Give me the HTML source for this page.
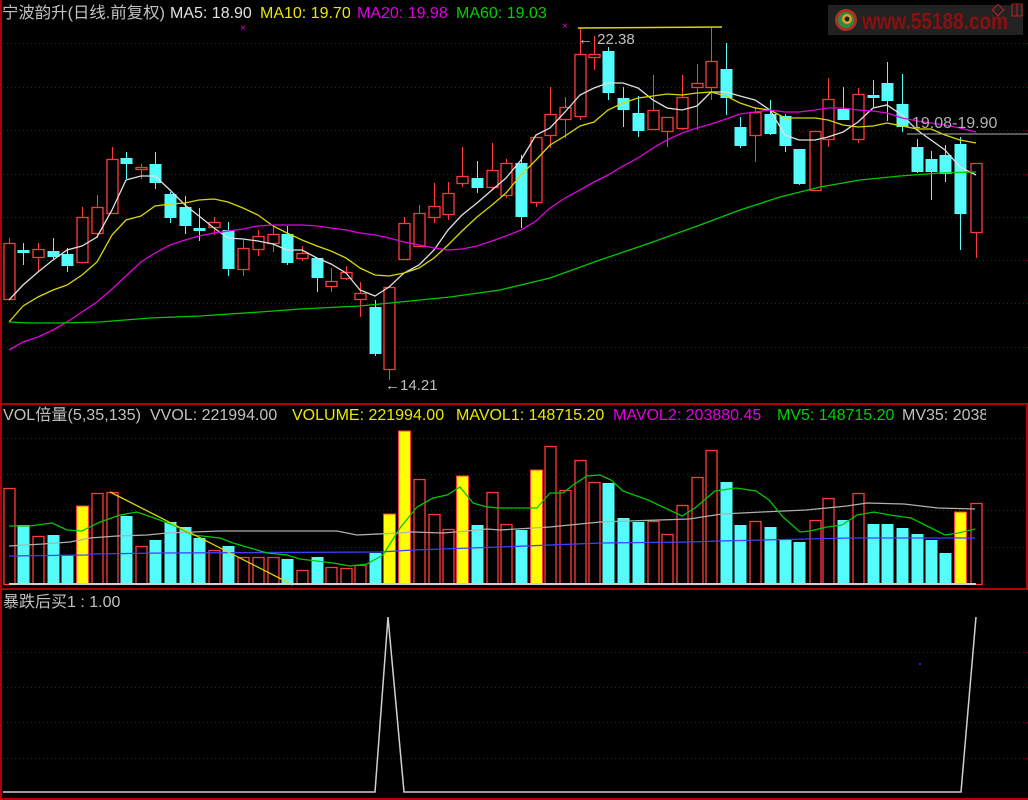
<!DOCTYPE html>
<html><head><meta charset="utf-8"><style>
html,body{margin:0;padding:0;background:#000;width:1028px;height:800px;overflow:hidden}
svg{display:block}
text{font-family:"Liberation Sans","Noto Sans CJK SC",sans-serif}
</style></head><body>
<svg id="s" width="1028" height="800" viewBox="0 0 1028 800" xmlns="http://www.w3.org/2000/svg">
<rect width="1028" height="800" fill="#000"/>
<g stroke="#8a0000" stroke-width="1" stroke-dasharray="1,3">
<line x1="3" y1="43.5" x2="1028" y2="43.5"/><line x1="3" y1="87.5" x2="1028" y2="87.5"/><line x1="3" y1="130.5" x2="1028" y2="130.5"/><line x1="3" y1="174.5" x2="1028" y2="174.5"/><line x1="3" y1="217.5" x2="1028" y2="217.5"/><line x1="3" y1="260.5" x2="1028" y2="260.5"/><line x1="3" y1="303.5" x2="1028" y2="303.5"/><line x1="3" y1="347.5" x2="1028" y2="347.5"/>
<line x1="3" y1="438.5" x2="1028" y2="438.5"/><line x1="3" y1="474.5" x2="1028" y2="474.5"/><line x1="3" y1="510.5" x2="1028" y2="510.5"/><line x1="3" y1="547.5" x2="1028" y2="547.5"/>
<line x1="3" y1="652.5" x2="1028" y2="652.5"/><line x1="3" y1="687.5" x2="1028" y2="687.5"/><line x1="3" y1="722.5" x2="1028" y2="722.5"/><line x1="3" y1="758.5" x2="1028" y2="758.5"/>
</g>
<g stroke="#b00000" stroke-width="2">
<line x1="1" y1="0" x2="1" y2="800"/>
<line x1="0" y1="404" x2="1028" y2="404"/>
<line x1="0" y1="589" x2="1028" y2="589"/>
<line x1="0" y1="799" x2="1028" y2="799"/>
<line x1="1027" y1="404" x2="1027" y2="589"/>
</g>
<g id="cand"></g>
<g fill="none" stroke-width="1.3">
<polyline id="ma5" stroke="#e0e0e0"/>
<polyline id="ma10" stroke="#d8d800"/>
<polyline id="ma20" stroke="#e000e0"/>
<polyline id="ma60" stroke="#00c800"/>
</g>
<line x1="578" y1="28" x2="722" y2="27" stroke="#d8d800" stroke-width="1.5"/>
<text x="240" y="31" fill="#e000e0" font-size="10">×</text>
<text x="562" y="29" fill="#e000e0" font-size="10">×</text>
<text x="578" y="44" fill="#c0c0c0" font-size="15">← 22.38</text>
<text x="385" y="390" fill="#c0c0c0" font-size="15">←14.21</text>
<line x1="907" y1="134" x2="1028" y2="134" stroke="#b0b0b0"/>
<text x="912" y="128" fill="#b0b0b0" font-size="16">19.08-19.90</text>
<rect x="828" y="5" width="195" height="30" fill="#222"/>
<circle cx="846" cy="20" r="11" fill="#b03020"/><circle cx="846" cy="20" r="8" fill="#2a8a4a"/><circle cx="847" cy="19" r="5" fill="#e8a020"/><circle cx="847" cy="19" r="2.5" fill="#222"/>
<text x="862" y="29" fill="#8a1010" font-weight="bold" font-size="23" textLength="146" lengthAdjust="spacingAndGlyphs">www.55188.com</text>
<rect x="994" y="6" width="8" height="8" fill="none" stroke="#c02020" transform="rotate(45 998 10)"/>
<rect x="1012" y="4" width="10" height="12" fill="none" stroke="#c02020"/><line x1="1017" y1="4" x2="1017" y2="16" stroke="#c02020"/>
<g font-size="16">
<text x="2" y="18" fill="#c0c0c0" textLength="163" lengthAdjust="spacingAndGlyphs">宁波韵升(日线.前复权)</text>
<text x="170" y="18" fill="#e0e0e0">MA5: 18.90</text>
<text x="260" y="18" fill="#e8e800">MA10: 19.70</text>
<text x="357" y="18" fill="#e000e0">MA20: 19.98</text>
<text x="456" y="18" fill="#00d000">MA60: 19.03</text>
</g>
<g id="vol"></g>
<g fill="none" stroke-width="1.3">
<polyline id="mv35" stroke="#b0b0b0"/>
<polyline id="mv135" stroke="#4040ff"/>
<polyline id="mv5" stroke="#00c800"/>
</g>
<line x1="110" y1="492" x2="293" y2="585" stroke="#d8d800" stroke-width="1.3"/>
<line x1="9" y1="584" x2="976" y2="584" stroke="#d0d0d0" stroke-width="2"/>
<g font-size="16">
<text x="3" y="420" fill="#c0c0c0" textLength="138" lengthAdjust="spacingAndGlyphs">VOL倍量(5,35,135)</text>
<text x="150" y="420" fill="#c0c0c0">VVOL: 221994.00</text>
<text x="292" y="420" fill="#e8e800">VOLUME: 221994.00</text>
<text x="456" y="420" fill="#e8e800">MAVOL1: 148715.20</text>
<text x="613" y="420" fill="#e000e0">MAVOL2: 203880.45</text>
<text x="777" y="420" fill="#00d000">MV5: 148715.20</text>
</g>
<svg x="0" y="404" width="986" height="30"><text x="902" y="16" fill="#c0c0c0" font-size="16">MV35: 203880</text></svg>
<text x="3" y="607" fill="#c0c0c0" font-size="16">暴跌后买1 : 1.00</text>
<polyline fill="none" stroke="#d0d0d0" stroke-width="1.5" points="3,792 375,792 388,617 404,792 961,792 976,617"/>
<rect x="919" y="663" width="2" height="2" fill="#2020ff"/>
</svg>
<script>
var NS="http://www.w3.org/2000/svg";
function el(p,t,a){var e=document.createElementNS(NS,t);for(var k in a)e.setAttribute(k,a[k]);p.appendChild(e);return e;}
var C=[[9,243,299,238,299,'r'],[23,250,252,243,265,'c'],[38,249,257,243,272,'r'],[53,251,256,238,259,'c'],[67,254,265,248,272,'c'],[82,217,262,207,262,'r'],[97,207,233,195,238,'r'],[112,159,213,147,213,'r'],[126,158,163,152,179,'c'],[141,167,169,164,179,'r'],[155,164,182,152,189,'c'],[170,194,217,192,223,'c'],[185,207,225,196,234,'c'],[199,228,230,208,241,'c'],[214,222,227,217,235,'r'],[228,230,268,222,276,'c'],[243,248,269,240,276,'r'],[258,236,249,230,256,'r'],[273,234,243,227,252,'r'],[287,234,262,226,265,'c'],[302,253,258,246,261,'r'],[317,258,277,258,292,'c'],[331,281,286,268,292,'r'],[346,272,278,266,280,'r'],[360,293,299,282,317,'r'],[375,307,353,300,356,'c'],[389,287,369,287,380,'r'],[404,223,259,217,259,'r'],[419,213,246,205,246,'r'],[434,206,217,183,223,'r'],[448,193,214,182,220,'r'],[462,176,183,147,187,'r'],[477,178,187,161,193,'c'],[492,170,187,143,190,'r'],[506,163,195,159,198,'r'],[521,163,216,155,228,'c'],[536,137,202,137,207,'r'],[550,114,135,87,148,'r'],[565,107,119,97,138,'r'],[580,54,116,28,120,'r'],[594,54,57,36,70,'r'],[608,51,92,47,100,'c'],[623,98,109,87,127,'c'],[638,113,130,96,137,'c'],[653,110,129,75,129,'r'],[667,117,131,117,147,'r'],[682,97,128,75,130,'r'],[697,83,87,64,130,'r'],[711,61,87,27,100,'r'],[726,69,97,43,115,'c'],[740,127,145,117,148,'c'],[755,112,135,107,162,'r'],[770,114,133,100,135,'c'],[785,116,145,114,152,'c'],[799,149,183,149,185,'c'],[815,131,190,131,190,'r'],[828,99,139,78,147,'r'],[843,109,119,87,119,'c'],[858,94,139,88,143,'r'],[873,95,97,80,107,'c'],[887,83,100,62,121,'c'],[902,104,126,74,132,'c'],[917,147,171,139,173,'c'],[931,159,171,151,200,'c'],[945,155,173,145,182,'c'],[960,144,213,137,250,'c'],[976,163,232,163,258,'r']];
var g=document.getElementById('cand');
C.forEach(function(c){var x=c[0],col=c[5]=='r'?'#ff3a3a':'#54fcfc';
 el(g,'line',{x1:x+0.5,y1:c[3],x2:x+0.5,y2:c[4],stroke:col,'stroke-width':1});
 var h=Math.max(c[2]-c[1],1);
 if(c[5]=='r'){el(g,'rect',{x:x-5,y:c[1]+0.5,width:11,height:h,fill:'#000',stroke:col,'stroke-width':1.3});}
 else el(g,'rect',{x:x-5.5,y:c[1],width:12,height:h+1,fill:col});
});
var V=[488,525,536,535,555,506,493,492,516,546,540,522,527,538,550,546,557,557,557,559,570,557,567,568,565,553,514,431,479,514,529,476,525,492,524,530,470,446,490,460,482,483,518,522,521,534,505,477,450,482,525,521,527,540,542,520,498,520,493,524,524,528,534,540,553,512,503];
var Y={5:1,26:1,27:1,31:1,36:1,65:1};
var vg=document.getElementById('vol');
C.forEach(function(c,i){var x=c[0],t=V[i];
 if(Y[i])el(vg,'rect',{x:x-5.5,y:t,width:12,height:584-t,fill:'#ffff00',stroke:'#ff3a3a','stroke-width':1});
 else if(c[5]=='r')el(vg,'rect',{x:x-5,y:t+0.5,width:11,height:584-t,fill:'#000',stroke:'#ff3a3a','stroke-width':1.3});
 else el(vg,'rect',{x:x-5.5,y:t,width:12,height:584-t,fill:'#54fcfc'});
});
function setp(id,p){document.getElementById(id).setAttribute('points',p);}
var xs=C.map(function(c){return c[0];});
function ser(a){return a.map(function(y,i){return xs[i]+','+y;}).join(' ');}
setp('ma5',ser([300,285,272,260,250,246,237,210,180,176,176,190,205,216,228,238,239,241,244,250,250,258,264,273,290,296,287,273,265,250,230,215,203,190,178,160,135,128,112,95,88,83,83,88,100,108,110,106,92,92,96,100,110,135,140,140,137,132,122,108,105,115,130,140,150,167,175]));
setp('ma10',ser([322,306,297,290,285,275,262,235,220,216,206,204,203,200,199,202,208,215,226,233,240,246,251,258,268,275,276,273,268,258,245,231,217,205,193,175,160,145,136,126,122,110,103,98,96,94,95,93,92,96,103,108,110,118,118,118,120,125,127,126,123,126,129,129,135,140,143]));
setp('ma20',ser([350,342,337,330,322,312,302,289,276,262,253,245,240,236,233,231,229,226,225,225,225,226,228,230,233,235,238,242,245,248,250,249,246,241,236,230,221,208,198,190,182,175,166,158,148,140,133,128,124,119,114,112,110,112,112,110,108,108,110,111,113,118,121,123,125,128,132]));
setp('ma60','9,322 30,323 60,323 100,322 150,318 200,316 260,312 300,309 360,306 400,302 450,297 500,290 550,278 600,260 650,243 700,225 740,210 780,197 820,187 860,180 900,176 940,173 976,172');
setp('mv5','9,526 30,526 52,523 67,530 82,531 100,522 120,515 137,512 157,519 173,525 193,535 220,538 233,543 267,553 287,555 300,559 333,563 350,566 367,564 383,555 400,528 417,507 433,498 447,495 460,487 473,503 487,507 500,508 537,508 550,493 563,493 573,485 587,476 600,475 611,480 623,491 648,500 682,516 695,508 715,491 736,488 756,491 769,500 783,517 800,532 810,531 827,527 842,525 857,515 874,512 890,515 911,518 931,528 945,535 958,533 975,529');
setp('mv35','9,546 43,544 70,542 90,538 117,536 147,535 167,533 220,531 337,531 357,535 400,533 413,532 443,533 467,531 487,529 500,530 550,527 600,522 689,519 722,514 762,512 806,510 847,506 867,503 904,504 938,508 975,509');
setp('mv135','9,556 87,555 90,554 163,553 380,552 413,550 500,547 601,543 689,542 719,541 850,538 975,538');
</script>
</body></html>
